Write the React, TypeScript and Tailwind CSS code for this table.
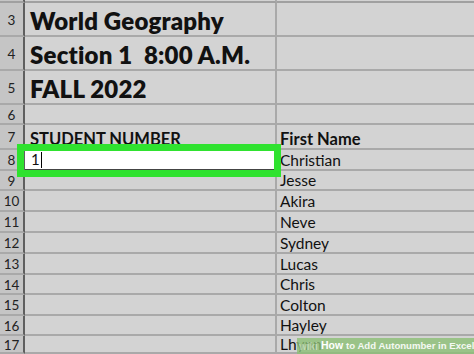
import React from "react";

const rows = [
  { n: 3, h: "h-[34px]", a: "World Geography", big: true },
  { n: 4, h: "h-[34px]", a: "Section 1\u00a0\u00a08:00 A.M.", big: true },
  { n: 5, h: "h-[34px]", a: "FALL 2022", big: true },
  { n: 6, h: "h-[20px]" },
  { n: 7, h: "h-[25px]", a: "STUDENT NUMBER", b: "First Name", head: true },
  { n: 8, h: "h-[21px]", b: "Christian", active: true },
  { n: 9, h: "h-[20px]", b: "Jesse" },
  { n: 10, h: "h-[21px]", b: "Akira" },
  { n: 11, h: "h-[21px]", b: "Neve" },
  { n: 12, h: "h-[21px]", b: "Sydney" },
  { n: 13, h: "h-[21px]", b: "Lucas" },
  { n: 14, h: "h-[20px]", b: "Chris" },
  { n: 15, h: "h-[21px]", b: "Colton" },
  { n: 16, h: "h-[20px]", b: "Hayley" },
  { n: 17, h: "h-[18px]", b: "Lhynn" },
];

type Row = (typeof rows)[number] & { big?: boolean; head?: boolean; active?: boolean; a?: string; b?: string };

const Cell = ({ children, className = "" }: { children?: React.ReactNode; className?: string }) => (
  <div className={"flex items-center overflow-hidden whitespace-nowrap border-b-2 border-[#a9a9a9] " + className}>
    {children}
  </div>
);

export default function App() {
  return (
    <div
      className="relative w-[474px] h-[354px] overflow-hidden bg-[#d3d3d3] text-[#111]"
      style={{ fontFamily: "Lato, 'Open Sans', sans-serif" }}
    >
      {/* top edge of row 2 */}
      <div className="grid grid-cols-[25px_252px_1fr] h-[3px]">
        <div className="bg-[#c5c5c5] border-r-2 border-[#5f5f5f] border-b-2 border-b-[#a0a0a0]" />
        <div className="border-r-2 border-[#a9a9a9] border-b-2 border-b-[#a0a0a0]" />
        <div className="border-b-2 border-[#a0a0a0]" />
      </div>

      {(rows as Row[]).map((r) => (
        <div key={r.n} className={"grid grid-cols-[25px_252px_1fr] " + r.h}>
          <Cell className="justify-center bg-[#c5c5c5] border-r-2 border-r-[#5f5f5f] text-[13.5px] text-[#222] pt-[2px]">
            {r.n}
          </Cell>
          <Cell className={"border-r-2 border-r-[#a9a9a9] pl-[5px] " + (r.active ? "bg-white border-b-[#444]" : "")}>
            {r.big && <span className="text-[24px] font-extrabold tracking-[0.2px] pt-[3px]">{r.a}</span>}
            {r.head && <span className="text-[16.5px] font-bold pt-[6px]">{r.a}</span>}
            {r.active && (
              <span className="flex items-center text-[15px] pl-[1px]">
                1<span className="ml-[1px] w-px h-[16px] bg-black" />
              </span>
            )}
          </Cell>
          <Cell className="pl-[3px]">
            {r.head ? (
              <span className="text-[16.5px] font-bold pt-[6px]">{r.b}</span>
            ) : (
              <span className="text-[15.5px] pt-[2px]">{r.b}</span>
            )}
          </Cell>
        </div>
      ))}

      {/* selected cell outline */}
      <div className="absolute left-[17px] top-[144px] w-[264px] h-[33px] border-[7px] border-[#2fe22f]" />

      {/* watermark */}
      <div
        className="absolute left-[297px] top-[338px] w-[177px] h-[16px] bg-[#8cbf75]/80 flex items-center pl-[2px] text-[9.6px] text-white font-bold whitespace-nowrap"
        style={{ fontFamily: "'Liberation Sans', Arial, sans-serif" }}
      >
        <span className="text-white/40 text-[10px] mr-[3px]">wiki</span>
        <span className="text-[10.5px]">How</span>
        <span className="ml-[3px] text-white/90">to Add Autonumber in Excel</span>
      </div>
    </div>
  );
}
